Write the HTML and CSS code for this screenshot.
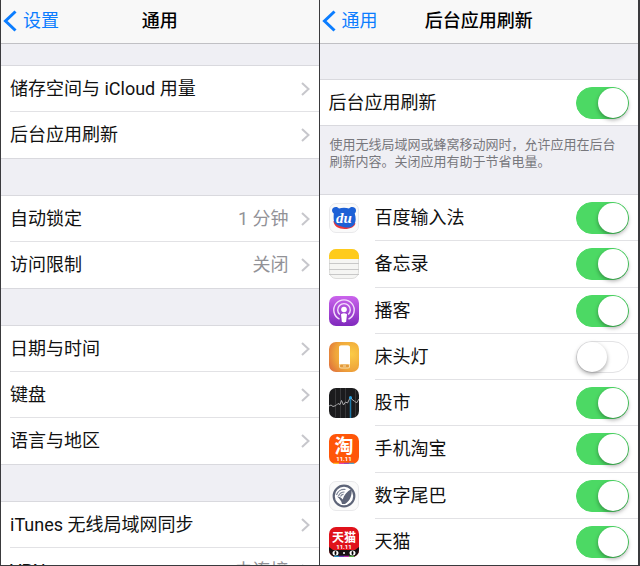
FILE: index.html
```
<!DOCTYPE html>
<html lang="zh-CN">

<head>
    <meta charset="UTF-8">
    <meta name="viewport" content="width=device-width, initial-scale=1.0">
    <title>通用</title>
    <link rel="stylesheet" href="styles.css">
</head>

<body>
    <div class="screens">
        <section class="screen">
            <header class="navbar">
                <a href="#" class="back"><svg viewBox="0 0 14 22"><path d="M12.500 1.500L2.500 11l10 9.500" /></svg>设置</a>
                <h1>通用</h1>
            </header>
            <ul class="group first">
                <li><a href="#"><span>储存空间与 iCloud 用量</span><svg class="arrow" viewBox="0 0 9 14"><path d="M1 1l6.500 6L1 13" /></svg></a></li>
                <li><a href="#"><span>后台应用刷新</span><svg class="arrow" viewBox="0 0 9 14"><path d="M1 1l6.500 6L1 13" /></svg></a></li>
            </ul>
            <ul class="group">
                <li><a href="#"><span>自动锁定</span><em>1 分钟</em><svg class="arrow" viewBox="0 0 9 14"><path d="M1 1l6.500 6L1 13" /></svg></a></li>
                <li><a href="#"><span>访问限制</span><em>关闭</em><svg class="arrow" viewBox="0 0 9 14"><path d="M1 1l6.500 6L1 13" /></svg></a></li>
            </ul>
            <ul class="group">
                <li><a href="#"><span>日期与时间</span><svg class="arrow" viewBox="0 0 9 14"><path d="M1 1l6.500 6L1 13" /></svg></a></li>
                <li><a href="#"><span>键盘</span><svg class="arrow" viewBox="0 0 9 14"><path d="M1 1l6.500 6L1 13" /></svg></a></li>
                <li><a href="#"><span>语言与地区</span><svg class="arrow" viewBox="0 0 9 14"><path d="M1 1l6.500 6L1 13" /></svg></a></li>
            </ul>
            <ul class="group">
                <li><a href="#"><span>iTunes 无线局域网同步</span><svg class="arrow" viewBox="0 0 9 14"><path d="M1 1l6.500 6L1 13" /></svg></a></li>
                <li><a href="#"><span>VPN</span><em>未连接</em><svg class="arrow" viewBox="0 0 9 14"><path d="M1 1l6.500 6L1 13" /></svg></a></li>
            </ul>
        </section>

        <section class="screen">
            <header class="navbar">
                <a href="#" class="back"><svg viewBox="0 0 14 22"><path d="M12.500 1.500L2.500 11l10 9.500" /></svg>通用</a>
                <h1>后台应用刷新</h1>
            </header>
            <div class="master">
                <label for="all">后台应用刷新</label>
                <input type="checkbox" class="switch" id="all" checked>
            </div>
            <p class="note">使用无线局域网或蜂窝移动网时，允许应用在后台刷新内容。关闭应用有助于节省电量。</p>
            <ul class="apps">
                <li>
                    <svg class="icon" viewBox="0 0 30 30">
                        <rect x=".5" y=".5" width="29" height="29" rx="6.500" fill="#fafafa" stroke="#e9e9eb" />
                        <path d="M4.500 18c0 5 5 8 11 8 6.500 0 10-2.500 11-5.500l-5-2z" fill="#e8383d" />
                        <path d="M4 5c2-1.800 5-1.200 6 .5 3-1 7-1 10 0 1-1.700 4-2.300 6-.5 1.700 2 1 4.500-.3 5.500 1.300 4 1.500 8-.5 11-2.700 3.500-7 3.500-11 2.500-5-1-8-3-9-5-.8-3-.6-6-.4-8.500C3.200 9.500 2.300 7 4 5z" fill="#1c60d6" />
                        <text x="15" y="19.500" text-anchor="middle" class="du">du</text>
                    </svg>
                    <label for="baidu">百度输入法</label>
                    <input type="checkbox" class="switch" id="baidu" checked>
                </li>
                <li>
                    <svg class="icon" viewBox="0 0 30 30">
                        <rect x=".5" y=".5" width="29" height="29" rx="6.500" fill="#f5f5f3" stroke="#dcdcda" />
                        <path d="M0 10V7a7 7 0 0 1 7-7h16a7 7 0 0 1 7 7v3z" fill="#fecb1c" />
                        <path d="M0 14.500h30M0 20.500h30M0 25.500h30" stroke="#c8c8c8" />
                    </svg>
                    <label for="notes">备忘录</label>
                    <input type="checkbox" class="switch" id="notes" checked>
                </li>
                <li>
                    <svg class="icon" viewBox="0 0 30 30">
                        <linearGradient id="purple" x2="0" y2="1"><stop stop-color="#cb64ec" /><stop offset="1" stop-color="#8029bd" /></linearGradient>
                        <rect width="30" height="30" rx="7" fill="url(#purple)" />
                        <g fill="none" stroke="#f3defb" stroke-width="1.400">
                            <path d="M10.500 23.200a10.200 10.200 0 1 1 9 0" />
                            <path d="M10.800 18.600a6.300 6.300 0 1 1 8.400 0" />
                        </g>
                        <circle cx="15" cy="13.500" r="2.800" fill="#fff" />
                        <path d="M12 18.200q3-1.800 6 0l-.8 7q-2.200 2.500-4.400 0z" fill="#fff" />
                    </svg>
                    <label for="podcast">播客</label>
                    <input type="checkbox" class="switch" id="podcast" checked>
                </li>
                <li>
                    <svg class="icon" viewBox="0 0 30 30">
                        <radialGradient id="lamp" cx=".75" cy=".4" r=".9"><stop stop-color="#fbcb45" /><stop offset=".6" stop-color="#efa53a" /><stop offset="1" stop-color="#dd6c3c" /></radialGradient>
                        <rect width="30" height="30" rx="7" fill="url(#lamp)" />
                        <rect x="10" y="3.500" width="11" height="23" rx="2" fill="#fae0ac" />
                        <path d="M10 5.500q0-2 2-2h7q2 0 2 2V22H10z" fill="#fff" />
                        <rect x="11" y="22.500" width="9" height="3" rx="1" fill="#e39a3c" />
                        <path d="M14 24h3" stroke="#fae0ac" />
                    </svg>
                    <label for="bedlamp">床头灯</label>
                    <input type="checkbox" class="switch" id="bedlamp">
                </li>
                <li>
                    <svg class="icon" viewBox="0 0 30 30">
                        <rect width="30" height="30" rx="7" fill="#1b1b1d" />
                        <path d="M6.500 1v28M11.500 0v30M16.500 0v30M26.500 1v28" stroke="#38383a" />
                        <path d="M21.500 9v21" stroke="#1b78aa" stroke-width="1.500" />
                        <path d="M0 18l2-1 2 1.500 3-1 2-2 2 1 1.500-4 2 4.500 2-3 2 1 3-6 2 3 2 1 2 2 2.500-4" fill="none" stroke="#aaaaac" />
                        <circle cx="21.500" cy="9.500" r="1.500" fill="#26a4e8" />
                    </svg>
                    <label for="stocks">股市</label>
                    <input type="checkbox" class="switch" id="stocks" checked>
                </li>
                <li>
                    <svg class="icon" viewBox="0 0 30 30">
                        <rect width="30" height="30" rx="7" fill="#ff5608" />
                        <text x="15" y="19" text-anchor="middle" class="tao">淘</text>
                        <text x="15" y="27" text-anchor="middle" class="date">11.11</text>
                        <path d="M4.500 29.300H10" stroke="#ffd22e" /><path d="M10 29.300h5" stroke="#e23bd0" /><path d="M15 29.300h5" stroke="#7d4be8" /><path d="M20 29.300h5" stroke="#2bb3ee" />
                    </svg>
                    <label for="taobao">手机淘宝</label>
                    <input type="checkbox" class="switch" id="taobao" checked>
                </li>
                <li>
                    <svg class="icon" viewBox="0 0 30 30">
                        <rect x=".5" y=".5" width="29" height="29" rx="6.500" fill="#fafafa" stroke="#e9e9eb" />
                        <circle cx="15" cy="15" r="10.300" fill="#fff" stroke="#5d6478" stroke-width="2.200" />
                        <path d="M22.500 8c.8 6.500-1.500 12-6.500 15h-3c-.5-3-2.500-5.500-5-7.500 2.500 0 4.300 1 5.700 3 1.300-4.500 4.300-8 8.800-10.500z" fill="#5d6478" />
                        <path d="M7.500 14c1-3.500 4.500-6 9-5.500M9.500 15c1-2.500 3-4 6-4M11.500 15.500c.5-1.300 1.500-2 3-2.300" fill="none" stroke="#7d8496" stroke-width="1.200" />
                    </svg>
                    <label for="dgtle">数字尾巴</label>
                    <input type="checkbox" class="switch" id="dgtle" checked>
                </li>
                <li>
                    <svg class="icon" viewBox="0 0 30 30">
                        <rect width="30" height="30" rx="7" fill="#e0121b" />
                        <path d="M0 20l4 3h22l4-3v3a7 7 0 0 1-7 7H7a7 7 0 0 1-7-7z" fill="#171113" />
                        <text x="15" y="15" text-anchor="middle" class="tmall">天猫</text>
                        <text x="15" y="22" text-anchor="middle" class="date">11.11</text>
                        <ellipse cx="6.500" cy="26" rx="3" ry="2.500" fill="#fff" /><ellipse cx="23.500" cy="26" rx="3" ry="2.500" fill="#fff" />
                        <ellipse cx="6.500" cy="26" rx="1" ry="2" /><ellipse cx="23.500" cy="26" rx="1" ry="2" />
                        <circle cx="15" cy="26" r="1" fill="#fff" />
                        <path d="M5 29.300h5" stroke="#2bb3ee" /><path d="M10 29.300h5" stroke="#7d4be8" /><path d="M15 29.300h5" stroke="#e23bd0" /><path d="M20 29.300h5" stroke="#5fd24a" />
                    </svg>
                    <label for="tmall">天猫</label>
                    <input type="checkbox" class="switch" id="tmall" checked>
                </li>
            </ul>
        </section>
    </div>
</body>

</html>
```
FILE: styles.css
```
* {
    padding: 0;
    margin: 0;
    box-sizing: border-box;
}

body {
    font-family: Roboto, "Noto Sans CJK SC", sans-serif;
    font-size: 18px;
    line-height: 24px;
    color: #111;
}

ul {
    list-style: none;
}

a {
    color: inherit;
    text-decoration: none;
}

.screens {
    display: grid;
    grid-template-columns: 1fr 1fr;
    height: 100vh;
    border: 1px solid #3a3a3d;
    border-top: 0;
    border-right-width: 2px;
}

.screen {
    display: flex;
    flex-direction: column;
    overflow: hidden;
    background: #efeff4;
}

.screen:first-child {
    border-right: 1px solid #3a3a3d;
}

.navbar {
    display: grid;
    grid-template-columns: 1fr auto 1fr;
    align-items: center;
    flex: none;
    height: 44px;
    padding: 0 2px 2px;
    background: #f8f8f8;
    border-bottom: 1px solid #c0c0c4;
}

.navbar h1 {
    font-size: 18px;
    font-weight: 500;
    color: #000;
}

.back {
    display: flex;
    align-items: center;
    gap: 6px;
    color: #0b7dff;
}

.back svg {
    width: 14px;
    height: 22px;
    fill: none;
    stroke: #0b7dff;
    stroke-width: 3;
}

.group {
    flex: none;
    margin-bottom: 36px;
    background: #fff;
    border-top: 1px solid #d9d9de;
    border-bottom: 1px solid #d9d9de;
}

.first {
    margin-top: 21px;
}

.group li {
    padding-left: 9px;
}

.group a {
    display: flex;
    align-items: center;
    height: 46px;
    padding-right: 9px;
    border-bottom: 1px solid #e2e2e5;
}

.group li:last-child a {
    border-bottom: 0;
}

.group span {
    flex: 1;
}

.group em {
    font-style: normal;
    color: #929297;
}

.arrow {
    width: 9px;
    height: 14px;
    margin-left: 12px;
    fill: none;
    stroke: #c7c7cc;
    stroke-width: 2;
}

.master {
    display: flex;
    align-items: center;
    justify-content: space-between;
    flex: none;
    height: 47px;
    margin-top: 35px;
    padding: 0 9px;
    background: #fff;
    border-top: 1px solid #d9d9de;
    border-bottom: 1px solid #d9d9de;
}

.note {
    flex: none;
    height: 68px;
    padding: 10px 20px 0 10px;
    font-size: 13px;
    line-height: 17px;
    color: #78787d;
}

.apps {
    display: grid;
    grid-auto-rows: 1fr;
    flex: 1;
    background: #fff;
    border-top: 1px solid #d9d9de;
}

.apps li {
    display: grid;
    grid-template-columns: 30px 1fr auto;
    align-items: center;
    column-gap: 16px;
    padding: 0 9px;
    background: linear-gradient(#e2e2e5, #e2e2e5) 55px 100% / 100% 1px no-repeat;
}

.apps li:last-child {
    background: none;
}

.icon {
    width: 30px;
    height: 30px;
}

.icon text {
    fill: #fff;
    font-family: "Noto Sans CJK SC", sans-serif;
    font-weight: 700;
}

.icon .du {
    font: italic 700 15px "Liberation Serif", serif;
}

.icon .tao {
    font-size: 19px;
}

.icon .tmall {
    font-size: 12px;
}

.icon .date {
    font: 700 6px Roboto, sans-serif;
}

.switch {
    appearance: none;
    width: 53px;
    height: 32px;
    border: 1px solid #e3e3e5;
    border-radius: 16px;
    background: #fff;
}

.switch::before {
    content: "";
    display: block;
    width: 30px;
    height: 30px;
    border-radius: 50%;
    background: #fff;
    box-shadow: 0 2px 4px rgba(0, 0, 0, .35);
}

.switch:checked {
    border-color: #4cd964;
    background: #4cd964;
}

.switch:checked::before {
    margin-left: 21px;
}
```
